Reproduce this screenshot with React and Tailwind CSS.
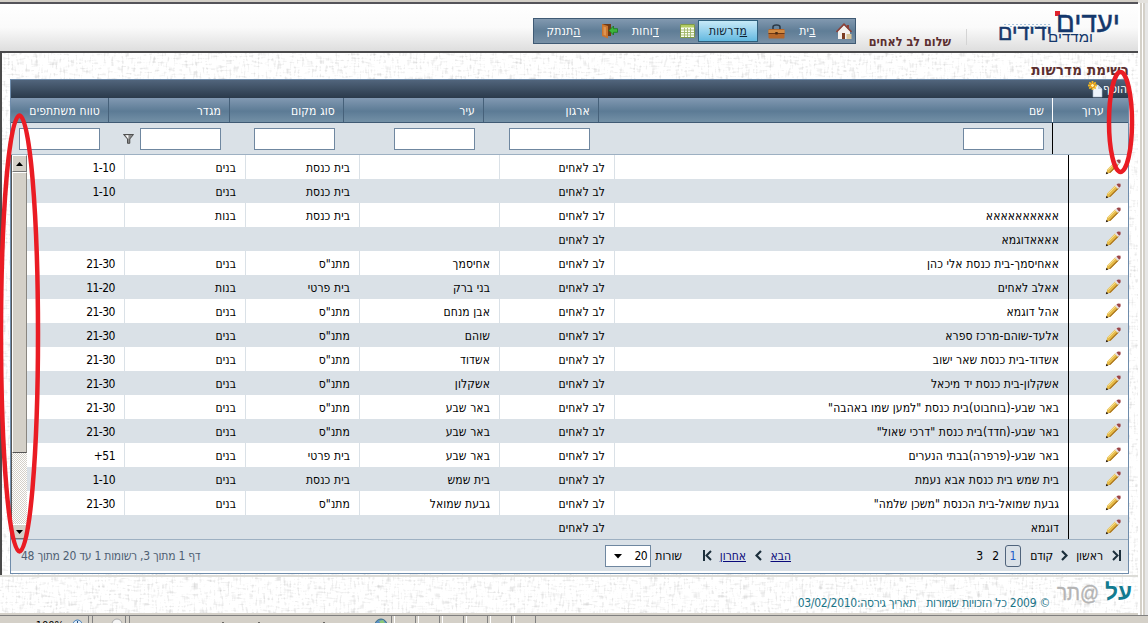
import clsx from 'clsx'

const navItems = [
  { key: 'ב', rest: 'ית', icon: HomeIcon, width: 'w-[68px]' },
  { key: 'מ', rest: 'דרשות', icon: BagIcon, width: 'w-[89px]', active: true },
  { key: 'ד', rest: 'וחות', icon: TableIcon, width: 'w-[78px]' },
  { key: 'ה', rest: 'תנתק', icon: DoorIcon, width: 'w-[86px]' },
]

const columns = [
  { label: 'שם', width: 'w-[454px]' },
  { label: 'ארגון', width: 'w-[115px]' },
  { label: 'עיר', width: 'w-[140px]' },
  { label: 'סוג מקום', width: 'w-[114px]' },
  { label: 'מגדר', width: 'w-[121px]', funnel: true },
  { label: 'טווח משתתפים', width: 'w-[97px]' },
]

const org = 'לב לאחים'
const rows = [
  ['', org, '', 'בית כנסת', 'בנים', '1-10'],
  ['', org, '', 'בית כנסת', 'בנים', '1-10'],
  ['אאאאאאאאאא', org, '', 'בית כנסת', 'בנות', ''],
  ['אאאאדוגמא', org, '', '', '', ''],
  ['אאחיסמך-בית כנסת אלי כהן', org, 'אחיסמך', 'מתנ"ס', 'בנים', '21-30'],
  ['אאלב לאחים', org, 'בני ברק', 'בית פרטי', 'בנות', '11-20'],
  ['אהל דוגמא', org, 'אבן מנחם', 'מתנ"ס', 'בנים', '21-30'],
  ['אלעד-שוהם-מרכז ספרא', org, 'שוהם', 'מתנ"ס', 'בנים', '21-30'],
  ['אשדוד-בית כנסת שאר ישוב', org, 'אשדוד', 'מתנ"ס', 'בנים', '21-30'],
  ['אשקלון-בית כנסת יד מיכאל', org, 'אשקלון', 'מתנ"ס', 'בנים', '21-30'],
  ['באר שבע-(בוחבוט)בית כנסת "למען שמו באהבה"', org, 'באר שבע', 'מתנ"ס', 'בנים', '21-30'],
  ['באר שבע-(חדד)בית כנסת "דרכי שאול"', org, 'באר שבע', 'מתנ"ס', 'בנים', '21-30'],
  ['באר שבע-(פרפרה)בבתי הנערים', org, 'באר שבע', 'בית פרטי', 'בנים', '+51'],
  ['בית שמש בית כנסת אבא נעמת', org, 'בית שמש', 'בית כנסת', 'בנים', '1-10'],
  ['גבעת שמואל-בית הכנסת "משכן שלמה"', org, 'גבעת שמואל', 'מתנ"ס', 'בנים', '21-30'],
  ['דוגמא', org, '', '', '', ''],
]

export default function App() {
  return (
    <div className="relative flex h-[630px] w-[1148px] flex-col overflow-hidden bg-white font-['DejaVu_Sans_Condensed','Liberation_Sans',sans-serif] text-[12px] leading-none text-black">
      <div className="flex h-[615px]">
        <div className="relative flex w-[1138px] flex-col">
          <Texture />
          <div className="relative flex h-full flex-col border-t-2 border-[#d4d0c8]" dir="rtl">
            <Header />
            <div className="h-[522px] border-l-2 border-[#4a4a4a] pr-[9px] pl-[8px]">
              <h1 className="flex h-[26px] items-end pb-px text-[15px] leading-[15px] font-bold tracking-[0.15px] text-[#5c2f30]">
                רשימת מדרשות
              </h1>
              <Grid />
            </div>
            <Footer />
          </div>
        </div>
        <div className="flex flex-1 border-t-[3px] border-[#e4e2de]">
          <div className="w-[2px] bg-white" />
          <div className="w-[2px] bg-[#d4d0c8]" />
          <div className="w-px bg-white" />
          <div className="w-[2px] bg-[#d4d0c8]" />
          <div className="flex-1 bg-[#e6e6e6]" />
        </div>
      </div>
      <StatusBar />
      <svg className="pointer-events-none absolute inset-0" width="1148" height="630" fill="none" stroke="#ea1c24" strokeWidth="4.5">
        <ellipse cx="19.5" cy="333.500" rx="18.5" ry="218" />
        <ellipse cx="1120.500" cy="122" rx="11.500" ry="50" />
      </svg>
    </div>
  )
}

// woven paper background
function Texture() {
  return (
    <svg className="absolute inset-0" width="1138" height="615">
      <filter id="weave" x="0" y="0" width="100%" height="100%" colorInterpolationFilters="sRGB">
        <feTurbulence type="fractalNoise" baseFrequency="0.12 0.5" numOctaves="1" seed="3" result="h" />
        <feTurbulence type="fractalNoise" baseFrequency="0.5 0.12" numOctaves="1" seed="8" result="v" />
        <feComposite in="h" in2="v" operator="arithmetic" k2="0.5" k3="0.5" />
        <feColorMatrix values="0.55 0 0 0 0.73  0.55 0 0 0 0.73  0.55 0 0 0 0.73  0 0 0 0 1" />
      </filter>
      <rect width="1138" height="615" filter="url(#weave)" />
    </svg>
  )
}

function Header() {
  return (
    <header className="flex h-[51px] border-t-2 border-b-2 border-t-[#55545a] border-b-[#4a4a4c] bg-linear-to-b from-white via-[#fafafa] to-[#dedede]">
      <div className="w-[171px] pt-[2px] pr-[16px]">
        <Logo />
      </div>
      <div className="mt-[25px] h-[16px] w-px bg-[#d4d4d4]" />
      <p className="w-[110px] pt-[32px] pr-[15px] text-[12.5px] font-bold whitespace-nowrap text-[#5c2f30]">שלום לב לאחים</p>
      <nav className="mt-[14px] flex h-[26px] w-[323px] items-center border border-[#3f5a74] bg-linear-to-b from-[#8299b0] from-0% via-[#5f7d96] via-50% to-[#7890a6]">
        {navItems.map((item) => {
          const Icon = item.icon
          return (
            <a key={item.key} className={clsx('flex h-[24px] items-center tracking-[0.2px]', item.width)}>
              <span className="flex w-[22px] shrink-0 justify-center">
                <Icon />
              </span>
              <span
                className={clsx(
                  'flex items-center justify-center',
                  item.active
                    ? 'mr-[7px] h-[22px] w-[60px] border border-[#2f5f7c] bg-linear-to-b from-[#c6e9f8] to-[#62b9e0] text-[#0d2233]'
                    : 'flex-1 pr-[5px] text-white',
                )}
              >
                <span className="underline">{item.key}</span>
                {item.rest}
              </span>
            </a>
          )
        })}
      </nav>
    </header>
  )
}

function Logo() {
  return (
    <svg width="126" height="42" viewBox="0 0 126 42" direction="rtl" fontFamily="Liberation Sans, sans-serif" fill="#14376b">
      <rect x="59" y="5" width="5" height="5" fill="#e0242c" />
      <path d="M8 18.500h48M14 20.500h40" stroke="#a9c4dc" strokeDasharray="2 2" />
      <text x="124" y="26" fontSize="29" textLength="64" lengthAdjust="spacingAndGlyphs" stroke="#14376b" strokeWidth=".5">יעדים</text>
      <text x="56" y="34" fontSize="21" textLength="54" lengthAdjust="spacingAndGlyphs" stroke="#14376b" strokeWidth=".5">ידידים</text>
      <text x="97" y="36" fontSize="14" textLength="45" lengthAdjust="spacingAndGlyphs">ומדדים</text>
    </svg>
  )
}

function Grid() {
  return (
    <section className="h-[495px] border border-[#6f8cab] bg-white">
      <div className="flex h-[18px] items-center bg-linear-to-b from-[#51657c] to-[#2b3a4b] text-white">
        <span className="w-[25px] pr-px">הוסף</span>
        <NewIcon />
      </div>

      <div className="flex h-[25px] border-b border-[#3f5a74] bg-linear-to-b from-[#8299b2] from-0% via-[#5c7b95] via-55% to-[#7390a6] tracking-[0.15px] text-white">
        <div className="flex w-[76px] items-center border-l border-white pt-px pr-[24px]">ערוך</div>
        {columns.map((col, i) => (
          <div
            key={col.label}
            className={clsx('flex items-center pt-px pr-[8px] whitespace-nowrap', col.width, i < 5 && 'border-l border-[#46617a]')}
          >
            {col.label}
          </div>
        ))}
      </div>

      <div className="flex h-[32px] border-b border-[#9db0c2] bg-[#dae1e7]">
        <div className="w-[76px] border-l border-black" />
        {columns.map((col) => (
          <div key={col.label} className={clsx('flex items-center pr-[8px]', col.width)}>
            <div className="h-[22px] w-[81px] shrink-0 border border-[#6f87a0] bg-white" />
            {col.funnel && <FunnelIcon />}
          </div>
        ))}
      </div>

      <div className="flex h-[384px]">
        <div className="flex flex-col">
          {rows.map((row, i) => (
            <div key={i} className={clsx('flex h-[24px]', i % 2 ? 'bg-[#dae1e7]' : 'bg-white')}>
              <div className="flex w-[60px] items-center border-l border-black pr-[7px]">
                <PencilIcon />
              </div>
              {columns.map((col, j) => (
                <div
                  key={col.label}
                  className={clsx('flex items-center pt-px pr-[9px] whitespace-nowrap', col.width, j < 5 && 'border-l border-[#dae1e7]')}
                >
                  <span dir={j === 5 ? 'ltr' : 'rtl'} className={j === 5 ? 'tracking-[-0.5px]' : 'tracking-[0.1px]'}>
                    {row[j]}
                  </span>
                </div>
              ))}
            </div>
          ))}
        </div>
        <Scrollbar />
      </div>

      <Pager />
    </section>
  )
}

function Scrollbar() {
  return (
    <div className="flex w-[16px] flex-col border-l border-[#555] bg-[repeating-conic-gradient(#d4d0c8_0_25%,#fff_0_50%)] bg-size-[2px_2px]">
      <div className="flex h-[17px] items-center justify-center border border-t-white border-r-[#777] border-b-[#777] border-l-white bg-[#d4d0c8]">
        <svg width="7" height="4"><path d="M3.500 0L7 4H0z" /></svg>
      </div>
      <div className="h-[281px] border border-t-white border-r-[#8a8680] border-b-[#555] border-l-white bg-[#d4d0c8]" />
      <div className="mt-auto flex h-[15px] items-center justify-center border border-t-white border-r-[#d4d0c8] border-b-[#777] border-l-white bg-[#d4d0c8]">
        <svg width="7" height="4"><path d="M0 0h7L3.500 4z" /></svg>
      </div>
    </div>
  )
}

function Pager() {
  return (
    <div className="flex h-[34px] items-center border-t border-b-2 border-t-[#9db0c2] border-b-white bg-[#dae1e7]">
      <div className="flex w-[25px] pr-[7px]">
        <svg width="9" height="11" fill="none" stroke="#1c2f3c" strokeWidth="2"><path d="M1 1l4.500 4.500L1 10M8 0v11" /></svg>
      </div>
      <span className="w-[35px] pt-px">ראשון</span>
      <svg className="ml-[8px]" width="7" height="11" fill="none" stroke="#1c2f3c" strokeWidth="2.2"><path d="M1 1l4.500 4.500L1 10" /></svg>
      <span className="w-[32px] pt-px tracking-[-0.2px]">קודם</span>
      <span className="flex h-[22px] w-[16px] items-center justify-center rounded-[3px] border border-[#50647c] pt-px text-[#1a5cc8]">1</span>
      <span className="mr-[6px] w-[16px] pt-px">2</span>
      <span className="w-[192px] pt-px">3</span>
      <span className="w-[29px] pt-px text-[#0a0a7a] underline">הבא</span>
      <svg className="ml-[9px]" width="7" height="11" fill="none" stroke="#1c2f3c" strokeWidth="2.2"><path d="M6 1L1.500 5.500 6 10" /></svg>
      <span className="w-[34px] pt-px text-[#0a0a7a] underline">אחרון</span>
      <svg className="ml-[21px]" width="9" height="11" fill="none" stroke="#1c2f3c" strokeWidth="2"><path d="M8 1L3.500 5.500 8 10M1 0v11" /></svg>
      <span className="w-[31px] pt-px">שורות</span>
      <div className="flex h-[22px] w-[46px] items-center justify-between border border-[#6f87a0] bg-white pt-px pr-[3px] pl-[8px] tracking-[-0.6px]">
        20
        <svg width="8" height="5"><path d="M0 0h8L4 4.500z" /></svg>
      </div>
      <span className="mr-auto pt-px pl-[10px] tracking-[-0.25px] text-[#4f5f73]">דף 1 מתוך 3, רשומות 1 עד 20 מתוך 48</span>
    </div>
  )
}

function Footer() {
  return (
    <footer className="flex h-[40px] border-t-2 border-b-2 border-t-[#dcdcd8] border-b-[#d4d0c8] text-[#1b7488]">
      <svg className="mr-[6px] shrink-0" width="76" height="34" direction="rtl" fontFamily="Liberation Sans, sans-serif">
        <text x="76" y="23" fontSize="23" fontWeight="bold" fill="#137b90" textLength="27" lengthAdjust="spacingAndGlyphs">על</text>
        <text x="43" y="23" fontSize="21" fill="#b4b4b4" stroke="#b4b4b4" strokeWidth=".4" textLength="42" lengthAdjust="spacingAndGlyphs">@תר</text>
      </svg>
      <span className="mr-[6px] w-[134px] shrink-0 pt-[20px] tracking-[-0.25px] whitespace-nowrap">© 2009 כל הזכויות שמורות</span>
      <span className="pt-[20px] tracking-[-0.3px] whitespace-nowrap">תאריך גירסה:03/02/2010</span>
    </footer>
  )
}

function StatusBar() {
  return (
    <div className="flex h-[8px] overflow-hidden border-t border-[#808080] bg-[#d4d0c8]">
      <div className="flex w-[89px] items-start justify-end gap-[8px] border-r border-[#808080] pt-[3px] pr-[5px]">
        <span className="pt-px text-[11px]">100%</span>
        <svg width="11" height="6"><circle cx="5.500" cy="5.500" r="4.500" fill="#dceaf8" stroke="#3d7ab8" /><path d="M5.500 2v4" stroke="#234e80" /></svg>
      </div>
      <div className="ml-[3px] flex w-[34px] justify-end border-x border-l-[#808080] border-r-[#808080] pt-[2px] pr-[2px]">
        <svg width="12" height="6"><circle cx="6" cy="6" r="5" fill="#f4f4f4" stroke="#aaa" /></svg>
      </div>
      <div className="ml-[3px] flex w-[263px] justify-end border-x border-l-[#808080] border-r-[#808080] pt-[2px] pr-[3px]">
        <svg className="mr-[49px] shrink-0" width="104" height="6"><path d="M2 4v2M38 4v2M103 4v2" stroke="#000" /></svg>
        <svg className="shrink-0" width="14" height="7"><circle cx="7" cy="7" r="6" fill="#5b8fc4" stroke="#3a6d80" /><path d="M5 3l4-1 2 3-4 1z" fill="#8cc878" /></svg>
      </div>
      {[0, 1, 2, 3, 4, 5].map((n) => (
        <div key={n} className="ml-[2px] w-[22px] border-r border-l border-r-[#808080] border-l-white" />
      ))}
    </div>
  )
}

function PencilIcon() {
  return (
    <svg width="16" height="16" viewBox="0 0 16 16">
      <path d="M1.200 14.800l1-4.300L10.500 2 14 5.300l-8.500 8.500z" fill="#e6bb48" />
      <path d="M3.800 13.800L13 4.500l1 .8-8.500 8.500z" fill="#a87420" />
      <path d="M3 10.800L11 2.800" stroke="#f9e6a0" />
      <path d="M9.800 2.800l1.700-1.600 3.200 3.100L13 6z" fill="#e6e0e2" />
      <path d="M11.500 1.500L13 .4l2.500.3.200 2.500L14.200 4.700z" fill="#9c4548" />
      <path d="M.8 15.200l.7-2.500 1.900 1.900z" fill="#2b1c10" />
    </svg>
  )
}

function NewIcon() {
  return (
    <svg width="15" height="17" viewBox="0 0 15 17">
      <path d="M5 4h5l4 4v8H5z" fill="#eef3fa" stroke="#a9b9cc" strokeWidth=".6" />
      <path d="M10 4v4h4z" fill="#c3d0e0" />
      <path d="M4.500 0v9M0 4.500h9M1.300 1.300l6.400 6.400M7.700 1.300L1.300 7.700" stroke="#f5b81e" strokeWidth="1.800" />
      <circle cx="4.500" cy="4.500" r="2" fill="#fff3a8" stroke="#e08a10" />
    </svg>
  )
}

function FunnelIcon() {
  return (
    <svg className="mr-[6px]" width="11" height="10" viewBox="0 0 11 10">
      <path d="M.5.500h10L6.800 5v4.300H4.500V5z" fill="#8a8a8a" stroke="#444" strokeWidth=".9" />
      <path d="M2.500 1.300h3L5.300 5z" fill="#fff" />
    </svg>
  )
}

function HomeIcon() {
  return (
    <svg width="16" height="17" viewBox="0 0 16 17">
      <path d="M11 2h2v4h-2z" fill="#8c4038" />
      <path d="M2 8l6-6 6 6v8H2z" fill="#f3f1ee" />
      <path d="M.5 9L8 1.200 15.500 9" fill="none" stroke="#8c4038" strokeWidth="1.600" />
      <path d="M6 10h3v6H6z" fill="#7a3c22" />
      <path d="M10.500 11h5v5h-5z" fill="#d8c49a" />
    </svg>
  )
}

function BagIcon() {
  return (
    <svg width="17" height="17" viewBox="0 0 17 17">
      <path d="M5 6V4q0-2 3.500-2T12 4v2" fill="none" stroke="#2c3a48" strokeWidth="1.600" />
      <rect x=".5" y="6" width="16" height="9.500" rx="1" fill="#b4662a" />
      <path d="M.5 7h16v3H.5z" fill="#d28a42" />
      <path d="M.5 10.500h16" stroke="#6e3814" />
      <path d="M7.300 9h2.400v2.500H7.300z" fill="#4a2a14" />
    </svg>
  )
}

function TableIcon() {
  return (
    <svg width="15" height="14" viewBox="0 0 15 14">
      <path d="M.5.500h14v13H.5z" fill="#fbfdf4" stroke="#7f9a4a" />
      <path d="M1 1h13v2.500H1z" fill="#b3cc62" />
      <path d="M1 6h13M1 8.500h13M1 11h13M4.500 4v9M7.500 4v9M10.500 4v9" stroke="#9fb56a" strokeWidth=".9" />
    </svg>
  )
}

function DoorIcon() {
  return (
    <svg width="17" height="16" viewBox="0 0 17 16">
      <path d="M1 1h9v12H1z" fill="#6e3a18" />
      <path d="M1 1l6 2v12.500L1 13z" fill="#c9752f" />
      <path d="M2.500 3.500l2.500.8v8.500l-2.500-1z" fill="#de9450" />
      <path d="M16.500 5.700v3.600H12.500V12L8 7.500 12.500 3v2.700z" fill="#3cb63c" stroke="#187a1c" strokeWidth=".8" />
    </svg>
  )
}
